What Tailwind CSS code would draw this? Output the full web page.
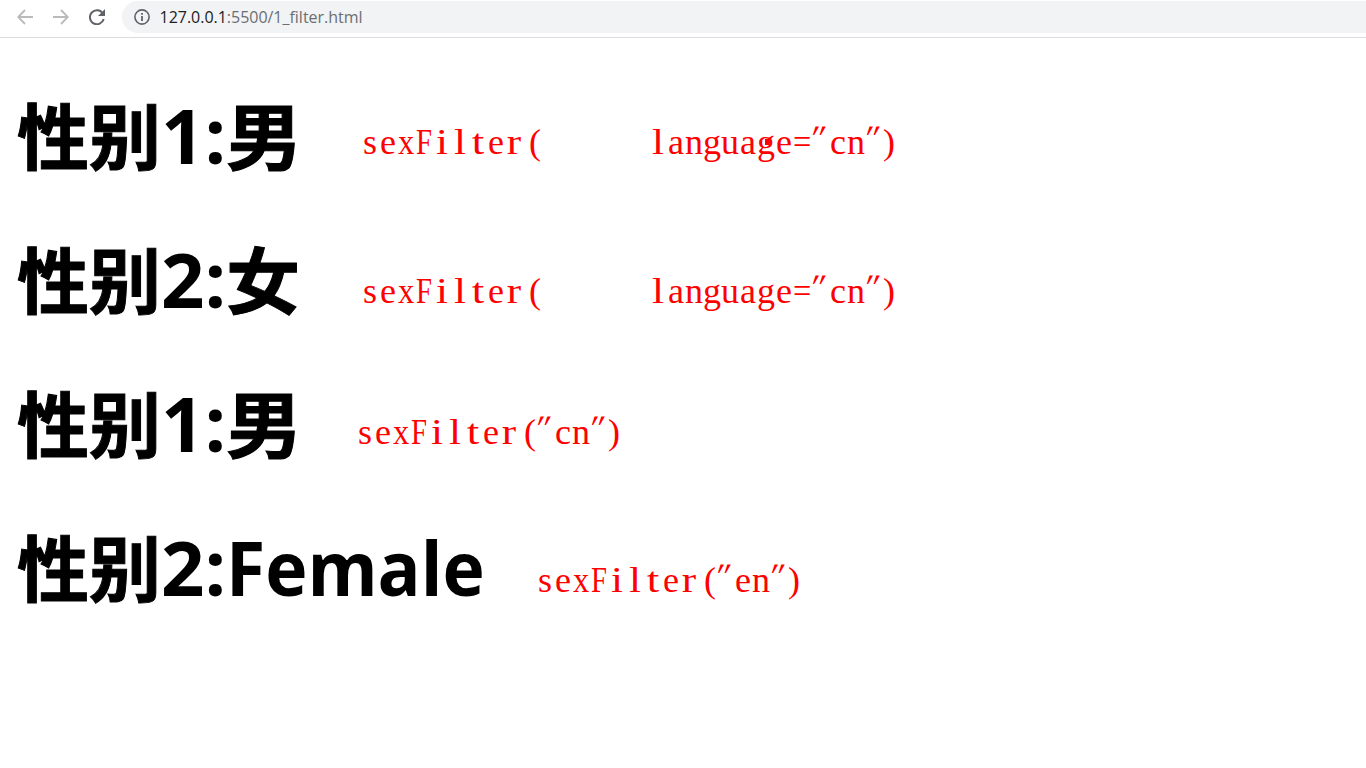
<!DOCTYPE html>
<html lang="zh-CN">
<head>
<meta charset="utf-8">
<title>1_filter.html</title>
<script src="https://cdn.jsdelivr.net/npm/@tailwindcss/browser@4"></script>
</head>
<body class="h-screen overflow-hidden bg-white">
<header class="flex h-[38px] items-start border-b border-[#dadce0]">
  <nav class="flex w-[122px] shrink-0 items-center gap-5 pt-[9px] pl-[17px]">
    <svg class="size-4" viewBox="0 0 16 16" fill="none" stroke="#bababc" stroke-width="1.8"><path d="M16 8H1.5M8 1L1.2 8L8 15"/></svg>
    <svg class="size-4" viewBox="0 0 16 16" fill="none" stroke="#bababc" stroke-width="1.8"><path d="M0 8H14.5M8 1L14.8 8L8 15"/></svg>
    <svg class="size-4" viewBox="0 0 16 16" fill="none" stroke="#5f6368" stroke-width="2"><path d="M13.8 4.4A7 7 0 1 0 14.7 10"/><path d="M16 0V7H9Z" fill="#5f6368" stroke="none"/></svg>
  </nav>
  <div class="mt-px flex h-8 flex-1 items-center rounded-l-full bg-[#f1f3f4] pl-3">
    <svg class="size-4" viewBox="0 0 16 16" fill="none" stroke="#5f6368"><circle cx="8" cy="8" r="7.1" stroke-width="1.6"/><path d="M8 7V12M8 4V5.7" stroke-width="1.8"/></svg>
    <span class="ml-[9.5px] whitespace-pre font-['Open_Sans',sans-serif] text-[16px] leading-none tracking-[-0.02px] text-[#6b6f73]"><span class="text-[#202124]">127.0.0.1</span>:5500/1_filter.html</span>
  </div>
</header>
<main class="flex flex-col pt-[23px] pl-[17px] font-['Open_Sans','Noto_Sans_CJK_SC',sans-serif] text-black">
  <section class="flex h-36 items-start">
    <h1 class="w-[344px] whitespace-nowrap text-[76px] leading-[144px] font-bold"><span class="font-['Noto_Sans_CJK_SC',sans-serif] text-[72px] [-webkit-text-stroke:1px_black]">性别</span>1:<span class="inline-block origin-left scale-x-106 font-['Noto_Sans_CJK_SC',sans-serif] text-[72px] [-webkit-text-stroke:1px_black]">男</span></h1>
    <p data-code class="relative mt-[61px] whitespace-pre font-['Liberation_Serif',serif] text-[36px] leading-10 text-[#ff0000]">sexFilter(      language="cn")<i class="absolute top-[17px] left-[404px] h-[6px] w-[4px] bg-[#ff0000]"></i><i class="absolute top-[19px] left-[407px] h-[2px] w-[4px] bg-[#ff0000]"></i></p>
  </section>
  <section class="flex h-36 items-start">
    <h1 class="w-[344px] whitespace-nowrap text-[76px] leading-[144px] font-bold"><span class="font-['Noto_Sans_CJK_SC',sans-serif] text-[72px] [-webkit-text-stroke:1px_black]">性别</span>2:<span class="inline-block origin-left scale-x-103 font-['Noto_Sans_CJK_SC',sans-serif] text-[72px] [-webkit-text-stroke:1px_black]">女</span></h1>
    <p data-code class="mt-[66px] whitespace-pre font-['Liberation_Serif',serif] text-[36px] leading-10 text-[#ff0000]">sexFilter(      language="cn")</p>
  </section>
  <section class="flex h-36 items-start">
    <h1 class="w-[339px] whitespace-nowrap text-[76px] leading-[144px] font-bold"><span class="font-['Noto_Sans_CJK_SC',sans-serif] text-[72px] [-webkit-text-stroke:1px_black]">性别</span>1:<span class="inline-block origin-left scale-x-106 font-['Noto_Sans_CJK_SC',sans-serif] text-[72px] [-webkit-text-stroke:1px_black]">男</span></h1>
    <p data-code class="mt-[63px] whitespace-pre font-['Liberation_Serif',serif] text-[36px] leading-10 text-[#ff0000]">sexFilter("cn")</p>
  </section>
  <section class="flex h-36 items-start">
    <h1 class="w-[519px] whitespace-nowrap text-[76px] leading-[144px] font-bold"><span class="font-['Noto_Sans_CJK_SC',sans-serif] text-[72px] [-webkit-text-stroke:1px_black]">性别</span>2:<span class="inline-block origin-left scale-x-94">Female</span></h1>
    <p data-code class="mt-[67px] whitespace-pre font-['Liberation_Serif',serif] text-[36px] leading-10 text-[#ff0000]">sexFilter("en")</p>
  </section>
</main>
<script>
// Set each character of a code note in a half-em cell, as a monospaced serif face does.
const shapes = {
  i: 'inline-block w-[18px] text-center scale-x-120',
  l: 'inline-block w-[18px] text-center scale-x-120',
  t: 'inline-block w-[18px] text-center scale-x-125',
  r: 'inline-block w-[18px] text-center scale-x-120',
  x: 'inline-block w-[18px] text-center scale-x-90',
  F: 'inline-block w-[18px] text-center scale-x-80 -indent-px',
  '=': 'inline-block w-[18px] text-center scale-x-90 -indent-px',
  '(': 'inline-block w-[18px] text-right',
  ')': 'inline-block w-[18px] text-left',
  '"': 'inline-block w-[18px] text-center italic skew-x-[-15deg] -translate-x-[5px] -translate-y-[4px]'
};
document.querySelectorAll('[data-code]').forEach(p => {
  const node = p.firstChild, out = document.createDocumentFragment();
  for (const c of node.data) {
    const s = document.createElement('span');
    s.textContent = c;
    s.className = shapes[c] || 'inline-block w-[18px] text-center';
    out.append(s);
  }
  node.replaceWith(out);
});
</script>
</body>
</html>
